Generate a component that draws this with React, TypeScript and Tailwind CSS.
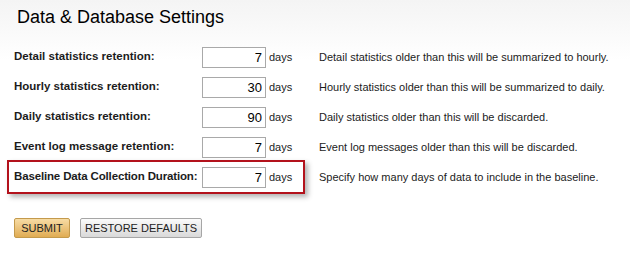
const rows = [
  { label: "Detail statistics retention:", value: "7", note: "Detail statistics older than this will be summarized to hourly." },
  { label: "Hourly statistics retention:", value: "30", note: "Hourly statistics older than this will be summarized to daily." },
  { label: "Daily statistics retention:", value: "90", note: "Daily statistics older than this will be discarded." },
  { label: "Event log message retention:", value: "7", note: "Event log messages older than this will be discarded." },
  { label: "Baseline Data Collection Duration:", value: "7", note: "Specify how many days of data to include in the baseline.", highlight: true },
];

export default function App() {
  return (
    <div className="h-[256px] w-[630px] bg-gradient-to-b from-[#f4f4f4] to-white to-[60px] font-['Liberation_Sans',Arial,sans-serif] text-[#1c1c1c]">
      <h1 className="pl-[17px] pt-[7px] text-[18px] leading-[20px] text-black">Data &amp; Database Settings</h1>

      <div className="mt-[15px] flex flex-col">
        {rows.map((row) => (
          <div className="flex h-[30px] items-center" key={row.label}>
            <div
              className={
                row.highlight
                  ? "-my-[2px] ml-[7px] flex h-[34px] w-[298px] shrink-0 items-center border-2 border-[#b3121c] pl-[5px] shadow-[3px_3px_5px_rgba(0,0,0,0.3)]"
                  : "ml-[7px] flex h-[34px] w-[298px] shrink-0 items-center border-2 border-transparent pl-[5px]"
              }
            >
              <span
                className={
                  row.highlight
                    ? "w-[188px] shrink-0 whitespace-nowrap text-[11.5px] font-bold tracking-[-0.15px]"
                    : "w-[188px] shrink-0 whitespace-nowrap text-[11.5px] font-bold"
                }
              >
                {row.label}
              </span>
              <input
                className="h-[21px] w-[64px] shrink-0 border border-[#a9a9a9] bg-white px-[3px] text-right text-[13px] text-black outline-none"
                defaultValue={row.value}
                readOnly
              />
              <span className="ml-[3px] text-[11px]">days</span>
            </div>
            <span className="ml-[14px] whitespace-nowrap text-[11px]">{row.note}</span>
          </div>
        ))}
      </div>

      <div className="ml-[14px] mt-[26px] flex gap-[10px]">
        <button className="h-[20px] w-[56px] rounded-[2px] border border-[#c49a4c] bg-gradient-to-b from-[#f7dca4] to-[#e0ac52] text-[11px] text-[#222]" type="button">
          SUBMIT
        </button>
        <button className="h-[20px] w-[122px] rounded-[2px] border border-[#a6a6a6] bg-gradient-to-b from-[#fbfbfb] to-[#d9d9d9] text-[11px] text-[#222]" type="button">
          RESTORE DEFAULTS
        </button>
      </div>
    </div>
  );
}
